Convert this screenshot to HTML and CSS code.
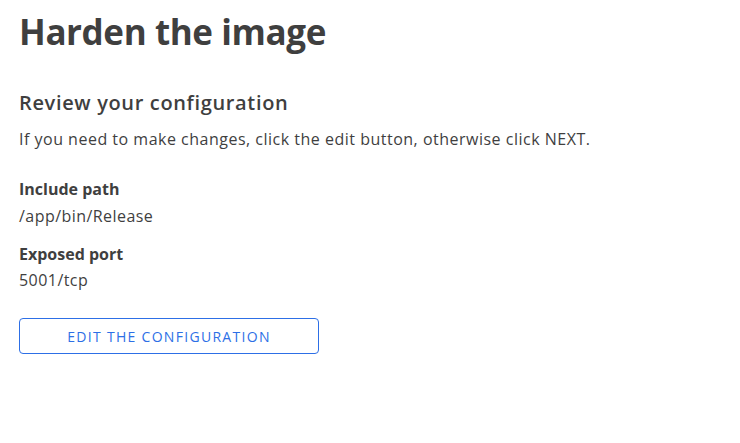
FILE: index.html
```html
<!DOCTYPE html>
<html lang="en">
<head>
<meta charset="utf-8">
<title>Harden the image</title>
<link rel="stylesheet" href="styles.css">
</head>
<body>
<main class="page">
  <h1 class="title">Harden the image</h1>
  <h2 class="subtitle">Review your configuration</h2>
  <p class="intro">If you need to make changes, click the edit button, otherwise click NEXT.</p>
  <dl class="config">
    <dt class="label">Include path</dt>
    <dd class="value">/app/bin/Release</dd>
    <dt class="label">Exposed port</dt>
    <dd class="value">5001/tcp</dd>
  </dl>
  <button class="edit-btn" type="button">Edit the configuration</button>
</main>
</body>
</html>
```
FILE: styles.css
```css
html, body {
  margin: 0;
  padding: 0;
  background: #ffffff;
}
body {
  font-family: "Open Sans", "Noto Sans", sans-serif;
  color: #3f3f3f;
}
.page {
  padding: 8px 19px;
}
.title {
  margin: 0;
  font-size: 35px;
  font-weight: 700;
  line-height: 48px;
  letter-spacing: -0.4px;
  color: #3f3f3f;
}
.subtitle {
  margin: 33px 0 0;
  font-size: 20px;
  font-weight: 600;
  line-height: 28px;
  letter-spacing: 0.65px;
}
.intro {
  margin: 10px 0 0;
  font-size: 16px;
  line-height: 24px;
  letter-spacing: 0.5px;
}
.config {
  margin: 26px 0 0;
}
.label {
  font-size: 16px;
  font-weight: 700;
  line-height: 24px;
}
.value {
  margin: 3px 0 14px;
  font-size: 16px;
  line-height: 24px;
  letter-spacing: 0.45px;
}
.value:last-child {
  margin-top: 2px;
}
.edit-btn {
  display: block;
  margin-top: 26px;
  width: 300px;
  height: 36px;
  background: #fff;
  border: 1px solid #2d6fe6;
  border-radius: 4px;
  color: #2d6fe6;
  font-family: "Open Sans", "Noto Sans", sans-serif;
  font-size: 14px;
  letter-spacing: 1.3px;
  text-transform: uppercase;
  cursor: pointer;
}
```
